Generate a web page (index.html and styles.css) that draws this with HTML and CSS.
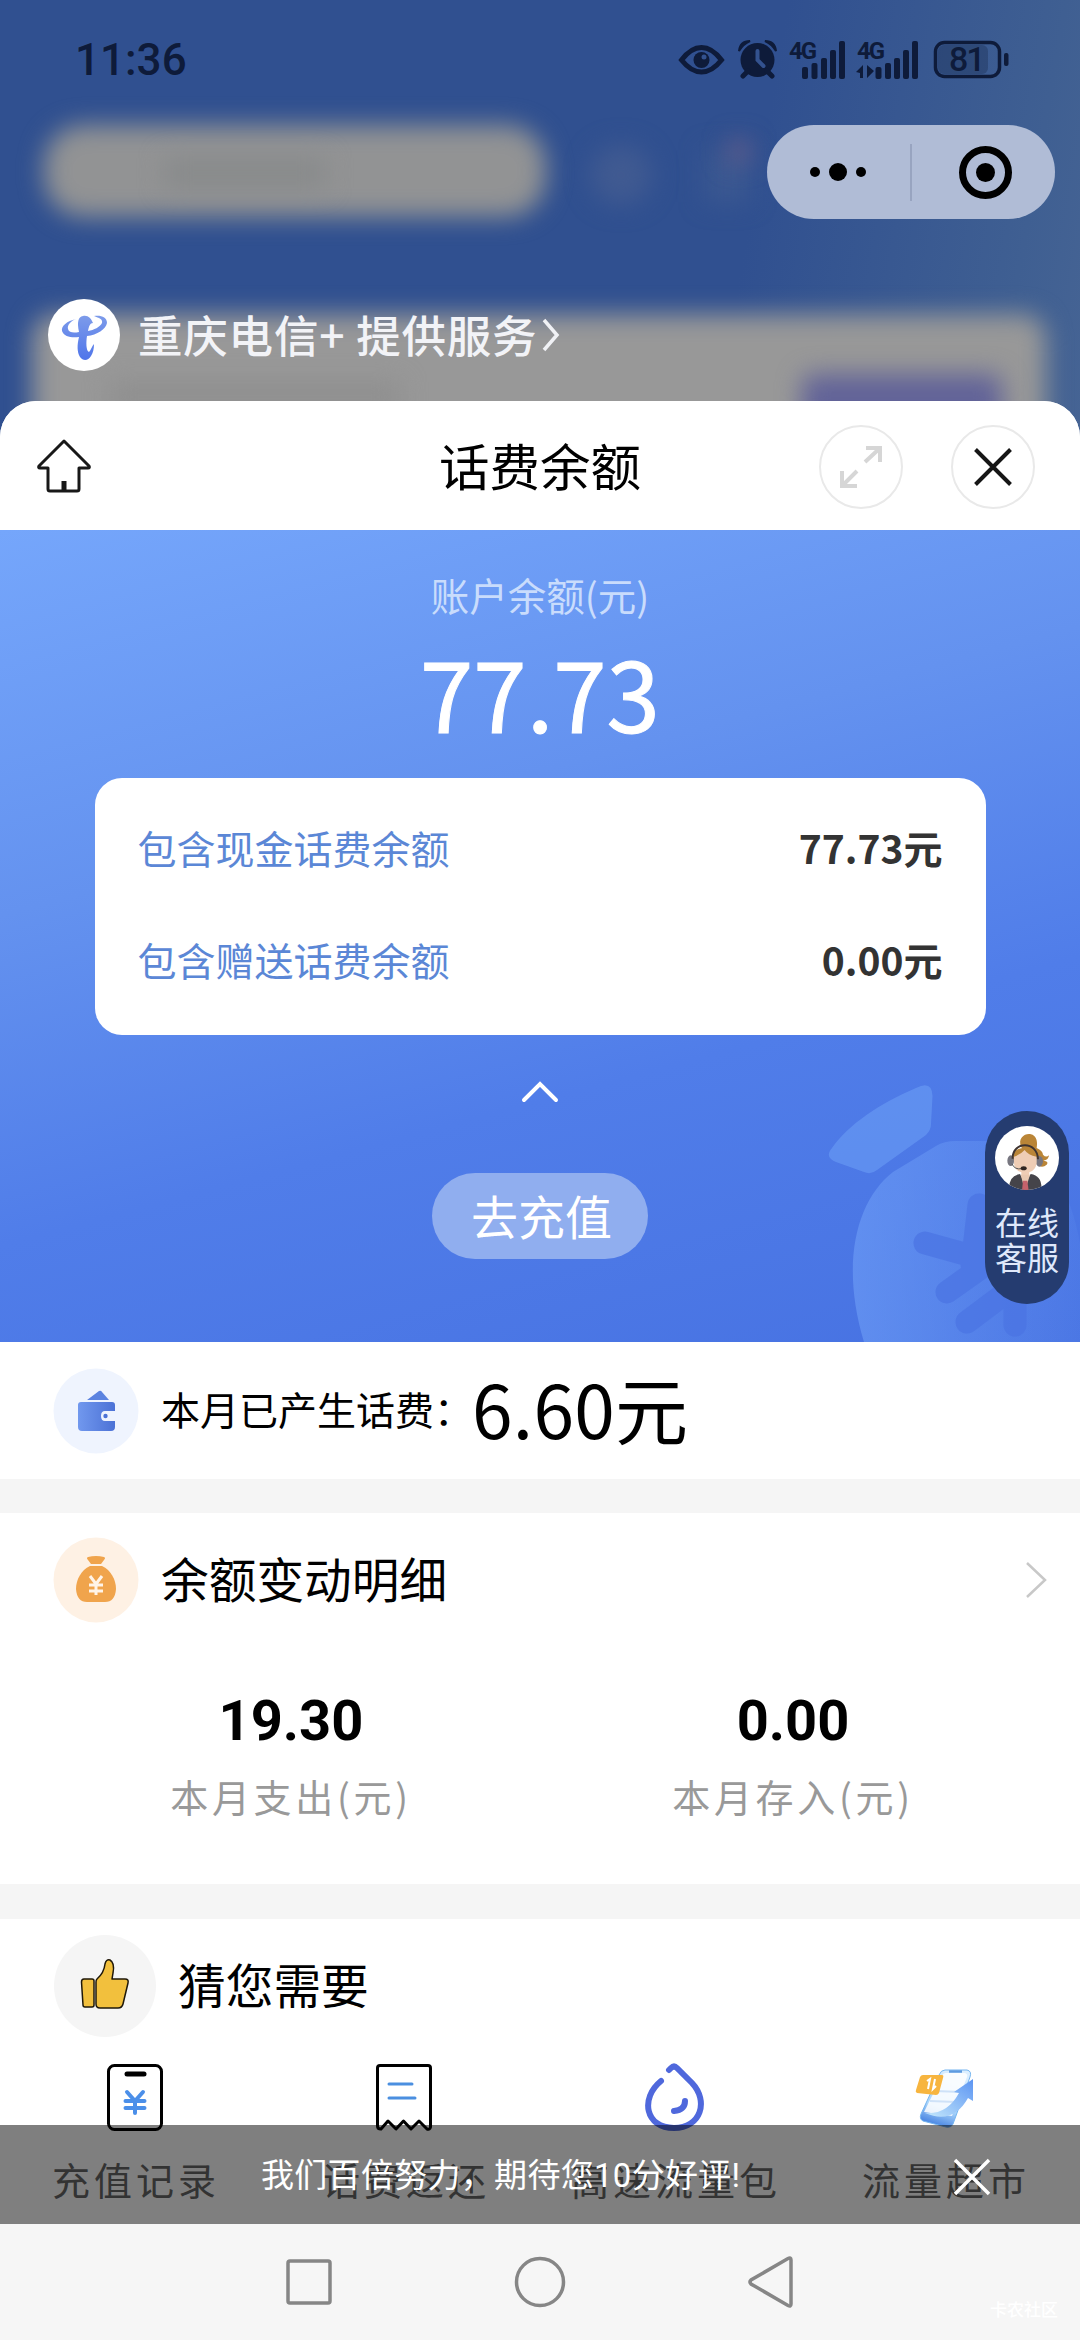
FILE: index.html
```html
<!DOCTYPE html>
<html lang="zh-CN">
<head>
<meta charset="utf-8">
<title>话费余额</title>
<link rel="stylesheet" href="styles.css">
</head>
<body>
<div class="screen">
  <header class="backdrop">
    <div class="blurred" aria-hidden="true">
      <i class="search"></i><i class="search-text"></i><i class="bell"></i><i class="scan"></i><i class="dot"></i>
      <i class="panel"></i><i class="panel-text"></i><i class="panel-btn"></i>
    </div>
    <div class="status">
      <span class="time">11:36</span>
      <svg class="status-icons" width="336" height="44" viewBox="676 38 336 44">
        <g fill="none" stroke="#0e1b3a" stroke-width="5">
          <path d="M681.5 60Q691 47.500 701.500 47.500T721.500 60Q712 72 701.500 72T681.500 60Z"/>
          <rect x="935.500" y="42.500" width="64" height="34" rx="9" stroke-width="3.500"/>
        </g>
        <g fill="#0e1b3a">
          <circle cx="701.500" cy="60" r="8"/>
          <circle cx="757.500" cy="60" r="17"/>
          <path d="M739 51q1-10 11-10q-7 3-11 10zM776 51q-1-10-11-10q7 3 11 10z" stroke="#0e1b3a" stroke-width="2"/>
          <path d="M748 71l-5 5M767 71l5 5" stroke="#0e1b3a" stroke-width="5" stroke-linecap="round"/>
          <rect x="802" y="67" width="6" height="12" rx="2"/><rect x="811.500" y="63" width="6" height="16" rx="2"/><rect x="821" y="58" width="6" height="21" rx="2"/><rect x="830" y="50" width="6" height="29" rx="2"/><rect x="839" y="41" width="6" height="38" rx="2"/>
          <rect x="875.500" y="67" width="6" height="12" rx="2"/><rect x="885" y="63" width="6" height="16" rx="2"/><rect x="894" y="58" width="6" height="21" rx="2"/><rect x="903" y="50" width="6" height="29" rx="2"/><rect x="912" y="41" width="6" height="38" rx="2"/>
          <path d="M856 72l7-7v13h-3v-5zM867 65v13l7-7z"/>
          <rect x="1004" y="53" width="4.500" height="13" rx="2"/>
          <rect x="938" y="45" width="50" height="29" rx="6" opacity=".28"/>
        </g>
        <path d="M757.500 51v9l6 6" fill="none" stroke="#33528f" stroke-width="4" stroke-linecap="round"/>
        <circle cx="704" cy="57" r="2.500" fill="#33528f"/>
        <text class="net" x="789" y="59">4G</text>
        <text class="net" x="857" y="59">4G</text>
        <text class="bat" x="949" y="71">81</text>
      </svg>
    </div>
    <div class="capsule-row">
      <svg class="capsule" width="288" height="94" viewBox="0 0 288 94">
        <rect width="288" height="94" rx="47" fill="#b0bcd6"/>
        <circle cx="48" cy="47" r="5"/><circle cx="71" cy="47" r="9"/><circle cx="94" cy="47" r="5"/>
        <path d="M144 19v57" stroke="#98a4c0" stroke-width="2"/>
        <circle cx="218.500" cy="47.500" r="23" fill="none" stroke="#000" stroke-width="7"/><circle cx="218.500" cy="47.500" r="9.500"/>
      </svg>
    </div>
    <div class="provider">
      <svg class="logo" width="72" height="72" viewBox="0 0 72 72">
        <defs><linearGradient id="tele" x1="0" y1="0" x2="0" y2="1"><stop offset="0" stop-color="#7d9bea"/><stop offset="1" stop-color="#4f75ea"/></linearGradient></defs>
        <circle cx="36" cy="36" r="36" fill="#fff"/>
        <path fill="url(#tele)" d="M28 20C19 22 13 27 14 32C16 38 24 39 31 38C29 46 29 53 32 58C35 62 40 62 43 57C45 54 46 50 46 45C44 47 43 51 41 53C38 52 38 43 39 37C49 36 58 30 59 24C59 18 53 16 46 17C51 19 55 20 54 24C52 28 46 31 40 32C41 27 42 24 45 24C43 19 40 16 35 17C30 18 29 23 31 33C26 34 21 34 20 30C19 26 23 22 28 20Z"/>
      </svg>
      <span class="provider-name">重庆电信+ 提供服务</span>
      <svg width="20" height="34" viewBox="0 0 20 34"><path d="M3 2l13 15L3 32" fill="none" stroke="#f0f1f5" stroke-width="3.500"/></svg>
    </div>
  </header>

  <main class="sheet">
    <div class="titlebar">
      <svg class="home" width="56" height="56" viewBox="0 2 56 56"><path d="M28 4L53 29Q54 31 52 31H43V52Q43 54 41 54H14Q12 54 12 52V31H4Q2 31 3 29Z" fill="none" stroke="#181818" stroke-width="3" stroke-linejoin="round"/><path d="M28 44v9" stroke="#181818" stroke-width="5"/></svg>
      <h1>话费余额</h1>
      <div class="tools">
        <svg width="86" height="86" viewBox="0 0 86 86"><circle cx="43" cy="43" r="41" fill="none" stroke="#e9e9e9" stroke-width="2"/><path d="M47 38L61 25M48 24H62V38M39 47L25 61M24 47V62H39" fill="none" stroke="#d6d6d6" stroke-width="4"/></svg>
        <svg width="86" height="86" viewBox="0 0 86 86"><circle cx="43" cy="43" r="41" fill="none" stroke="#e9e9e9" stroke-width="2"/><path d="M25.500 25.500l35 35M60.500 25.500l-35 35" stroke="#161616" stroke-width="4"/></svg>
      </div>
    </div>

    <section class="hero">
      <svg class="pouch" width="260" height="262" viewBox="820 1080 260 262">
        <defs><linearGradient id="bag" x1="0" x2="1"><stop offset="0" stop-color="#6f9ff7" stop-opacity=".6"/><stop offset=".6" stop-color="#6f9ff7" stop-opacity=".3"/><stop offset="1" stop-color="#6f9ff7" stop-opacity=".1"/></linearGradient></defs>
        <path d="M832 1148C848 1125 880 1103 916 1088Q932 1080 932.500 1096L931 1124Q931 1130 926 1135L877 1170Q871 1175 864 1172L836 1162Q824 1157 832 1148Z" fill="#6b9cf5" opacity=".6"/>
        <path d="M864 1342C840 1262 857 1200 893 1172L936 1146Q944 1141 956 1141H1010C1050 1150 1080 1200 1084 1280L1080 1342Z" fill="url(#bag)"/>
        <g stroke="#4b74e3" stroke-width="23" stroke-linecap="round" fill="none" opacity=".75"><path d="M925 1243l65 18M979 1205l-7 60M947 1292l45-32M967 1322l60-45M1015 1290v35"/></g>
      </svg>
      <p class="hero-label">账户余额(元)</p>
      <p class="hero-amount">77.73</p>
      <div class="card">
        <div class="line"><span>包含现金话费余额</span><b>77.73元</b></div>
        <div class="line"><span>包含赠送话费余额</span><b>0.00元</b></div>
      </div>
      <svg class="up" width="38" height="24" viewBox="0 0 38 24"><path d="M3 20L19 4l16 16" fill="none" stroke="#fff" stroke-width="4" stroke-linecap="round"/></svg>
      <button class="recharge">去充值</button>
      <aside class="service">
        <svg width="64" height="64" viewBox="61 76 192 192">
          <defs><clipPath id="face"><circle cx="157" cy="172" r="96"/></clipPath></defs>
          <circle cx="157" cy="172" r="96" fill="#fff"/>
          <g clip-path="url(#face)">
            <path d="M140 140C128 112 150 98 166 100C190 104 188 130 186 142Q204 150 205 162Q214 172 223 164Q222 178 206 180Q224 182 216 192Q202 204 188 192Z" fill="#ba8537"/>
            <path d="M110 180C106 130 194 126 196 184Q190 200 180 180L120 178Z" fill="#ba8537"/>
            <ellipse cx="108" cy="180" rx="10" ry="16" fill="#777680"/><ellipse cx="194" cy="182" rx="11" ry="16" fill="#777680"/>
            <path d="M118 168Q140 160 150 148Q160 164 186 168V188Q182 210 164 215V232H140V215Q120 210 118 188Z" fill="#efcdb5"/>
            <path d="M114 174C112 122 188 118 190 176" fill="none" stroke="#3f3431" stroke-width="6"/>
            <path d="M112 190Q120 208 142 204" fill="none" stroke="#555" stroke-width="3"/><ellipse cx="147" cy="203" rx="9" ry="6" fill="#302622"/>
            <path d="M104 270Q100 225 136 220L151 250L168 220Q204 225 200 270Z" fill="#45444a"/>
            <path d="M138 222L151 270L166 222Z" fill="#e9c8b0"/><path d="M145 240h13l4 30h-20z" fill="#c5626b"/>
          </g>
        </svg>
        <span>在线<br>客服</span>
      </aside>
    </section>

    <section class="row spend">
      <svg width="86" height="86" viewBox="0 0 86 86">
        <defs><linearGradient id="wal" x1="0" x2="1"><stop offset="0" stop-color="#7198ee"/><stop offset="1" stop-color="#4c72d6"/></linearGradient></defs>
        <circle cx="43" cy="43" r="42.500" fill="#eff4fe"/>
        <path d="M34 32L46 23Q48 22 49 24L56 32Z" fill="#5c83e0"/>
        <path d="M28 34H59Q62 34 62 37V43H52Q48 43 48 48T52 53H62V59Q62 63 58 63H29Q25 63 25 59V37Q25 34 28 34Z" fill="url(#wal)"/><circle cx="52.500" cy="48" r="2.200" fill="#4c72d6"/>
      </svg>
      <span class="spend-label">本月已产生话费：</span>
      <span class="spend-value">6.60元</span>
    </section>

    <section class="detail">
      <div class="row detail-head">
        <svg width="86" height="86" viewBox="0 0 86 86">
          <circle cx="43" cy="43" r="42.500" fill="#fef1e4"/>
          <path d="M35 20Q43 18 51 20Q53 21 51 23L48 27H38L35 23Q33 21 35 20Z" fill="#f0a44c"/>
          <path d="M37 29H49C58 33 63 43 63 52Q62 65 52 65H34Q24 65 23 52C23 43 28 33 37 29Z" fill="#f0a44c"/>
          <path d="M37 39l6 8 6-8M36 48h14M36 54h14M43 47v11" stroke="#fff4e8" stroke-width="3" fill="none"/>
        </svg>
        <h2>余额变动明细</h2>
        <svg class="go" width="22" height="36" viewBox="0 0 22 36"><path d="M2 1l18 17L2 35" fill="none" stroke="#c8c8c8" stroke-width="2.500"/></svg>
      </div>
      <div class="stats">
        <div><b>19.30</b><span>本月支出(元)</span></div>
        <div><b>0.00</b><span>本月存入(元)</span></div>
      </div>
    </section>

    <section class="guess">
      <div class="row guess-head">
        <svg width="102" height="102" viewBox="0 0 102 102"><circle cx="51" cy="51" r="51" fill="#f5f5f5"/><g fill="#f2c03d" stroke="#1f1809" stroke-width="1.500" stroke-linejoin="round"><path d="M30 44H38Q40 44 40 46V70Q40 72 38 72H31Q29 72 29 70L27.500 47Q27.500 44 30 44Z"/><path d="M43 44Q50 38 51 29Q52 24 56 25Q61 28 59 38L58 44H71Q75 44 74 48L69 69Q68 73 64 73H46Q42 73 42 69V47Q42 45 43 44Z"/></g></svg>
        <h2>猜您需要</h2>
      </div>
      <div class="grid">
        <div class="item">
          <svg width="60" height="70" viewBox="0 0 60 70"><rect x="3.500" y="2.500" width="53" height="64" rx="6" fill="none" stroke="#000" stroke-width="3"/><path d="M22 11h17" stroke="#000" stroke-width="5" stroke-linecap="round"/><path d="M22 29l8 9 8-9M20.500 38h19M20.500 45h19M30 38v12" fill="none" stroke="#4b8fe9" stroke-width="4" stroke-linecap="round"/></svg>
          <span>充值记录</span>
        </div>
        <div class="item">
          <svg width="60" height="70" viewBox="0 0 60 70"><path d="M2.500 5Q2.500 2.500 5 2.500H53Q55.500 2.500 55.500 5V64Q55 67 52 66L44 58L36 66L28.500 58L21 66L13 58L6 66Q2.500 66 2.500 63Z" fill="none" stroke="#000" stroke-width="3" stroke-linejoin="round"/><path d="M14 21h23M14 35h26" stroke="#4b8fe0" stroke-width="3" stroke-linecap="round"/></svg>
          <span>话费返还</span>
        </div>
        <div class="item">
          <svg width="60" height="70" viewBox="0 0 60 70"><path d="M16 18C-5 35 0 65 29 65C56 65 64 38 47 20L32 5Q29 2 26 5L24 7" fill="none" stroke="#4f68dc" stroke-width="6" stroke-linecap="round"/><path d="M40 38Q40 47 29 48" fill="none" stroke="#4f68dc" stroke-width="6" stroke-linecap="round"/></svg>
          <span>高速流量包</span>
        </div>
        <div class="item">
          <svg width="60" height="70" viewBox="0 0 60 70">
            <defs><linearGradient id="ph" x1=".6" y1="0" x2=".3" y2="1"><stop offset="0" stop-color="#dcefff"/><stop offset=".65" stop-color="#a9d5fb"/><stop offset="1" stop-color="#3f7de0"/></linearGradient><linearGradient id="ar" x1="1" y1="0" x2="0" y2="1"><stop offset="0" stop-color="#5b94f2"/><stop offset="1" stop-color="#c5e9fc"/></linearGradient></defs>
            <path d="M30 7H52Q57 8 55 14L38 61Q36 65 31 64L8 58Q4 56 6 51L24 12Q26 7 30 7Z" fill="url(#ph)" stroke="#74b5f0" stroke-width="1"/>
            <path d="M31 10H50Q53 11 52 14L37 53L9 49L27 13Q28 10 31 10Z" fill="#fff" opacity=".85"/>
            <path d="M20 28l26 1M15 38l26 1" stroke="#cfe2f8" stroke-width="2"/><path d="M34 8.500h13" stroke="#5f9be0" stroke-width="2.500"/>
            <path d="M10 50Q32 52 44 30L39 29L58 16V38L53 35Q38 62 10 50Z" fill="url(#ar)"/>
            <path d="M8 12H27Q29 12 28 15L24 30Q23 32 21 32L2 30Q0 29 1 27L5 14Q6 12 8 12Z" fill="#f7b53f"/>
            <path d="M12 18l3-2-2 10M20 16l-2 10 3-3" fill="none" stroke="#fff" stroke-width="2"/>
          </svg>
          <span>流量超市</span>
        </div>
      </div>
      <div class="toast">
        <span>我们百倍努力，期待您10分好评!</span>
        <svg class="toast-close" width="38" height="38" viewBox="0 0 38 38"><path d="M2 2l34 34M36 2L2 36" stroke="#fff" stroke-width="3.500"/></svg>
      </div>
    </section>
  </main>

  <nav class="sysnav">
    <svg width="50" height="54" viewBox="0 0 50 54"><rect x="4" y="6" width="42" height="42" rx="2" fill="none" stroke="#868686" stroke-width="3.500"/></svg>
    <svg width="54" height="54" viewBox="0 0 54 54"><circle cx="27" cy="27" r="23.500" fill="none" stroke="#868686" stroke-width="3.500"/></svg>
    <svg width="50" height="54" viewBox="0 0 50 54"><path d="M43 3.500Q46 2 46 5V49Q46 52 43 50.500L6 29Q4 27 6 25Z" fill="none" stroke="#868686" stroke-width="3.500"/></svg>
    <span class="mark">卡农社区</span>
  </nav>
</div>
</body>
</html>
```
FILE: styles.css
```css
* { box-sizing: border-box; margin: 0; padding: 0; }
body { font-family: "Noto Sans CJK SC", sans-serif; color: #000; background: #fff; }
svg { display: block; flex: none; }
.screen { width: 1080px; height: 2340px; display: flex; flex-direction: column; overflow: hidden; background: #30508f; }

/* dimmed page behind the sheet */
.backdrop { position: relative; height: 401px; flex: none; display: flex; flex-direction: column; }
.blurred { position: absolute; left: 0; right: 0; top: 0; height: 450px; overflow: hidden; background: linear-gradient(100deg, #305090 68%, #3f5f92 92%, #466494); }
.blurred i { position: absolute; filter: blur(12px); }
.search { left: 44px; top: 125px; width: 502px; height: 92px; border-radius: 40px; background: #929394; }
.search-text { left: 165px; top: 158px; width: 160px; height: 30px; background: #888a8b; }
.bell { left: 590px; top: 145px; width: 62px; height: 60px; border-radius: 30px; background: #405a91; }
.scan { left: 705px; top: 150px; width: 45px; height: 52px; background: #3b5891; }
.dot { left: 728px; top: 140px; width: 22px; height: 22px; background: #605b8a; }
.panel { left: 32px; top: 314px; width: 1014px; height: 200px; border-radius: 24px; background: #989898; }
.panel-text { left: 110px; top: 382px; width: 290px; height: 30px; background: #8f8f8f; }
.panel-btn { left: 802px; top: 374px; width: 200px; height: 90px; border-radius: 12px; background: #626398; }
.status { position: relative; height: 120px; padding: 0 68px 0 75px; display: flex; align-items: center; justify-content: space-between; }
.time { font: 500 44px/1 Roboto, sans-serif; color: #0e1b3a; }
.net { font: 700 24px Roboto, sans-serif; fill: #0e1b3a; letter-spacing: -2px; }
.bat { font: 500 34px Roboto, sans-serif; fill: #0e1b3a; letter-spacing: -2px; }
.capsule-row { position: relative; padding: 5px 25px 0 0; display: flex; justify-content: flex-end; }
.provider { position: relative; margin-top: 80px; padding-left: 48px; display: flex; align-items: center; }
.provider-name { margin: 0 4px 0 18px; padding-bottom: 2px; font-size: 44.500px; line-height: 70px; letter-spacing: .8px; font-weight: 500; color: #f2f3f7; white-space: nowrap; }

/* sheet */
.sheet { position: relative; flex: 1; display: flex; flex-direction: column; background: #f5f5f5; border-radius: 36px 36px 0 0; overflow: hidden; }
.titlebar { height: 129px; flex: none; padding: 2px 44px 0 36px; display: grid; grid-template-columns: 1fr auto 1fr; align-items: center; background: #fff; }
h1 { padding: 0 0 6px 8px; font-size: 50.500px; font-weight: 400; line-height: 72px; }
.tools { display: flex; justify-content: flex-end; gap: 46px; }

.hero { position: relative; height: 812px; flex: none; display: flex; flex-direction: column; align-items: center; background: linear-gradient(165deg, #75a6fb 0%, #6492ef 35%, #507de9 65%, #4772e2 100%); }
.pouch { position: absolute; right: 0; bottom: 0; }
.hero-label { margin-top: 36px; font-size: 38.500px; line-height: 56px; color: #c9dcfc; }
.hero-amount { margin-top: 5px; font-size: 96px; line-height: 130px; color: #fff; -webkit-text-stroke: 1px #fff; }
.card { position: relative; width: 891px; height: 257px; margin-top: 21px; padding: 13px 43px 15px; border-radius: 27px; background: #fff; }
.line { height: 112px; display: flex; align-items: center; justify-content: space-between; font-size: 39px; color: #5b87d6; }
.line b { font-weight: 700; color: #333; }
.up { margin-top: 45px; }
.recharge { margin-top: 69px; width: 216px; height: 86px; padding: 0 0 3px 3px; border: 0; border-radius: 43px; background: #90aeef; color: #fff; font: 400 47px/80px "Noto Sans CJK SC", sans-serif; }
.service { position: absolute; right: 11px; top: 581px; width: 84px; height: 193px; padding-top: 15px; display: flex; flex-direction: column; align-items: center; gap: 14px; border-radius: 42px; background: #253c70; color: #dfe8fb; font-size: 32px; line-height: 35px; white-space: nowrap; }

.row { display: flex; align-items: center; background: #fff; }
.spend { height: 137px; flex: none; padding-left: 53px; }
.spend-label { margin-left: 22px; width: 311px; padding-bottom: 5px; font-size: 39px; line-height: 60px; white-space: nowrap; }
.spend-value { padding-bottom: 7px; font-size: 73px; line-height: 100px; letter-spacing: .3px; white-space: nowrap; }
.detail { height: 371px; flex: none; margin-top: 34px; background: #fff; }
.detail-head { height: 134px; padding: 0 33px 0 53px; }
h2 { padding-bottom: 5px; font-weight: 400; font-size: 47.700px; line-height: 70px; }
.detail-head h2 { margin-left: 22px; }
.go { margin-left: auto; }
.stats { display: flex; padding: 42px 36px 0 40px; }
.stats div { flex: 1; display: flex; flex-direction: column; align-items: center; }
.stats b { font: 700 56px/64px Roboto, sans-serif; }
.stats span { margin-top: 15px; font-size: 38px; line-height: 56px; letter-spacing: 3.700px; color: #999; }
.guess { position: relative; flex: 1; margin-top: 35px; background: #fff; }
.guess-head { height: 134px; padding-left: 54px; }
.guess-head h2 { margin-left: 22px; }
.grid { display: grid; grid-template-columns: repeat(4, 1fr); padding-top: 10px; }
.item { display: flex; flex-direction: column; align-items: center; }
.item span { margin-top: 16px; font-size: 38px; line-height: 60px; letter-spacing: 4px; padding-left: 2px; color: #666; white-space: nowrap; }
.toast { position: absolute; left: 0; right: 0; bottom: 0; height: 99px; padding: 3px 0 0 261px; display: flex; align-items: center; background: rgba(0,0,0,.5); color: #fff; font: 400 33px/50px Roboto, "Noto Sans CJK SC", sans-serif; letter-spacing: .3px; white-space: nowrap; }
.toast-close { position: absolute; right: 89px; top: 33px; }
.sysnav { position: relative; height: 116px; flex: none; padding: 0 285px 0 284px; display: flex; align-items: center; justify-content: space-between; background: #f6f6f6; }
.mark { position: absolute; right: 22px; bottom: 17px; font-size: 17px; line-height: 28px; font-weight: 500; color: #fff; }
```
